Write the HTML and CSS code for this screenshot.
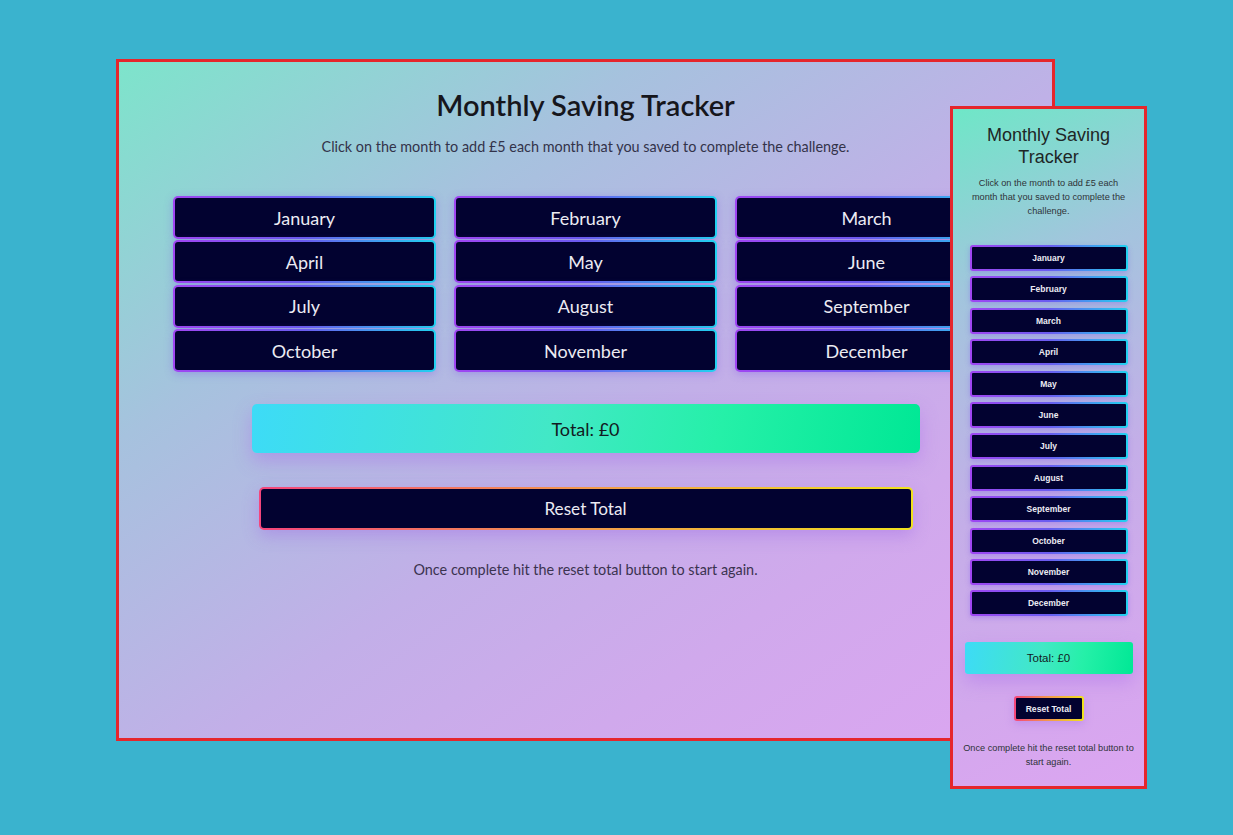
FILE: index.html
```html
<!DOCTYPE html>
<html lang="en">
<head>
<meta charset="utf-8">
<title>Monthly Saving Tracker</title>
<link rel="stylesheet" href="styles.css">
</head>
<body>
<div class="stage">
  <section class="window desktop">
    <h1 class="d-title">Monthly Saving Tracker</h1>
    <p class="d-intro">Click on the month to add £5 each month that you saved to complete the challenge.</p>
    <div class="d-months">
      <button class="month d-month">January</button>
      <button class="month d-month">February</button>
      <button class="month d-month">March</button>
      <button class="month d-month">April</button>
      <button class="month d-month">May</button>
      <button class="month d-month">June</button>
      <button class="month d-month">July</button>
      <button class="month d-month">August</button>
      <button class="month d-month">September</button>
      <button class="month d-month">October</button>
      <button class="month d-month">November</button>
      <button class="month d-month">December</button>
    </div>
    <div class="total d-total">Total: £0</div>
    <button class="reset d-reset">Reset Total</button>
    <p class="d-outro">Once complete hit the reset total button to start again.</p>
  </section>

  <section class="window mobile">
    <h1 class="m-title">Monthly Saving Tracker</h1>
    <p class="m-intro">Click on the month to add £5 each month that you saved to complete the challenge.</p>
    <div class="m-months">
      <button class="month m-month">January</button>
      <button class="month m-month">February</button>
      <button class="month m-month">March</button>
      <button class="month m-month">April</button>
      <button class="month m-month">May</button>
      <button class="month m-month">June</button>
      <button class="month m-month">July</button>
      <button class="month m-month">August</button>
      <button class="month m-month">September</button>
      <button class="month m-month">October</button>
      <button class="month m-month">November</button>
      <button class="month m-month">December</button>
    </div>
    <div class="total m-total">Total: £0</div>
    <button class="reset m-reset">Reset Total</button>
    <p class="m-outro">Once complete hit the reset total button to start again.</p>
  </section>
</div>
</body>
</html>
```
FILE: styles.css
```css
* { box-sizing: border-box; }

html, body {
  margin: 0;
  padding: 0;
}

body {
  width: 1233px;
  height: 835px;
  background: #3ab3ce;
  overflow: hidden;
}

.stage {
  position: relative;
  width: 1233px;
  height: 835px;
}

.window {
  position: absolute;
  border: 3px solid #e5262c;
  background: linear-gradient(to bottom right, #7de4cb 0%, #a6c2de 28%, #c2afe8 55%, #d0a9ec 75%, #dca5f1 100%);
  display: flex;
  flex-direction: column;
  align-items: center;
  overflow: hidden;
}

.month, .reset {
  display: flex;
  align-items: center;
  justify-content: center;
  margin: 0;
  padding: 0;
  color: #ecebf3;
  border: 2px solid transparent;
  border-radius: 5px;
  cursor: pointer;
}

.month {
  background:
    linear-gradient(#020230, #020230) padding-box,
    linear-gradient(90deg, #a046f2 0%, #6a5cf0 50%, #20d2f0 100%) border-box;
  box-shadow: 0 2px 8px rgba(120, 80, 230, 0.35);
}

.reset {
  background:
    linear-gradient(#020230, #020230) padding-box,
    linear-gradient(90deg, #f4457c 0%, #f29a4c 50%, #f0e21e 100%) border-box;
  box-shadow: 0 6px 16px rgba(160, 110, 230, 0.45);
}

.total {
  display: flex;
  align-items: center;
  justify-content: center;
  color: #121a22;
  border-radius: 5px;
  background: linear-gradient(100deg, #3ddbf7 0%, #42e8c6 45%, #25f0a8 70%, #00e895 100%);
  box-shadow: 0 8px 18px rgba(170, 110, 235, 0.45);
}

/* ---------- desktop ---------- */
.desktop {
  left: 116px;
  top: 59px;
  width: 939px;
  height: 682px;
  padding-top: 24px;
  font-family: "Lato", "Open Sans", sans-serif;
}

.d-title {
  margin: 0;
  font-size: 29px;
  line-height: 38px;
  font-weight: 600;
  color: #16161c;
}

.d-intro {
  margin: 13px 0 0;
  font-size: 14.4px;
  line-height: 20px;
  color: #33334a;
}

.d-months {
  margin-top: 39px;
  display: grid;
  grid-template-columns: repeat(3, 263px);
  grid-auto-rows: 43px;
  column-gap: 18px;
  row-gap: 1.4px;
}

.d-month {
  font-family: inherit;
  font-size: 18px;
}

.d-total {
  margin-top: 32px;
  width: 668px;
  height: 49px;
  font-size: 18px;
}

.d-reset {
  margin-top: 34px;
  width: 654px;
  height: 43px;
  font-family: inherit;
  font-size: 17.2px;
}

.d-outro {
  margin: 30px 0 0;
  font-size: 14.4px;
  line-height: 20px;
  color: #3b3350;
}

/* ---------- mobile ---------- */
.mobile {
  left: 950px;
  top: 106px;
  width: 197px;
  height: 683px;
  padding-top: 15px;
  font-family: "Liberation Sans", Arial, sans-serif;
  background: linear-gradient(155deg, #6ee7c7 0%, #a2c5dd 25%, #c4aee8 55%, #d3a8ed 80%, #dca5f1 100%);
}

.m-title {
  margin: 0;
  width: 160px;
  text-align: center;
  font-size: 18px;
  line-height: 22px;
  font-weight: 400;
  color: #1e2626;
}

.m-intro {
  margin: 8px 0 0;
  width: 162px;
  text-align: center;
  font-size: 9.2px;
  line-height: 14px;
  color: #2e3338;
}

.m-months {
  margin-top: 27px;
  display: flex;
  flex-direction: column;
  gap: 5.4px;
}

.m-month {
  width: 158px;
  height: 26px;
  font-family: inherit;
  font-size: 8.5px;
  font-weight: 700;
  border-radius: 3px;
  box-shadow: 0 2px 5px rgba(120, 80, 230, 0.35);
}

.m-total {
  margin-top: 26px;
  width: 168px;
  height: 32px;
  font-size: 11.5px;
  border-radius: 3px;
}

.m-reset {
  margin-top: 22px;
  width: 70px;
  height: 25px;
  font-family: inherit;
  font-size: 8.6px;
  font-weight: 700;
  border-radius: 3px;
  box-shadow: 0 3px 8px rgba(160, 110, 230, 0.4);
}

.m-outro {
  margin: 20px 0 0;
  width: 176px;
  text-align: center;
  font-size: 9.2px;
  line-height: 14px;
  color: #2e3338;
}
```
